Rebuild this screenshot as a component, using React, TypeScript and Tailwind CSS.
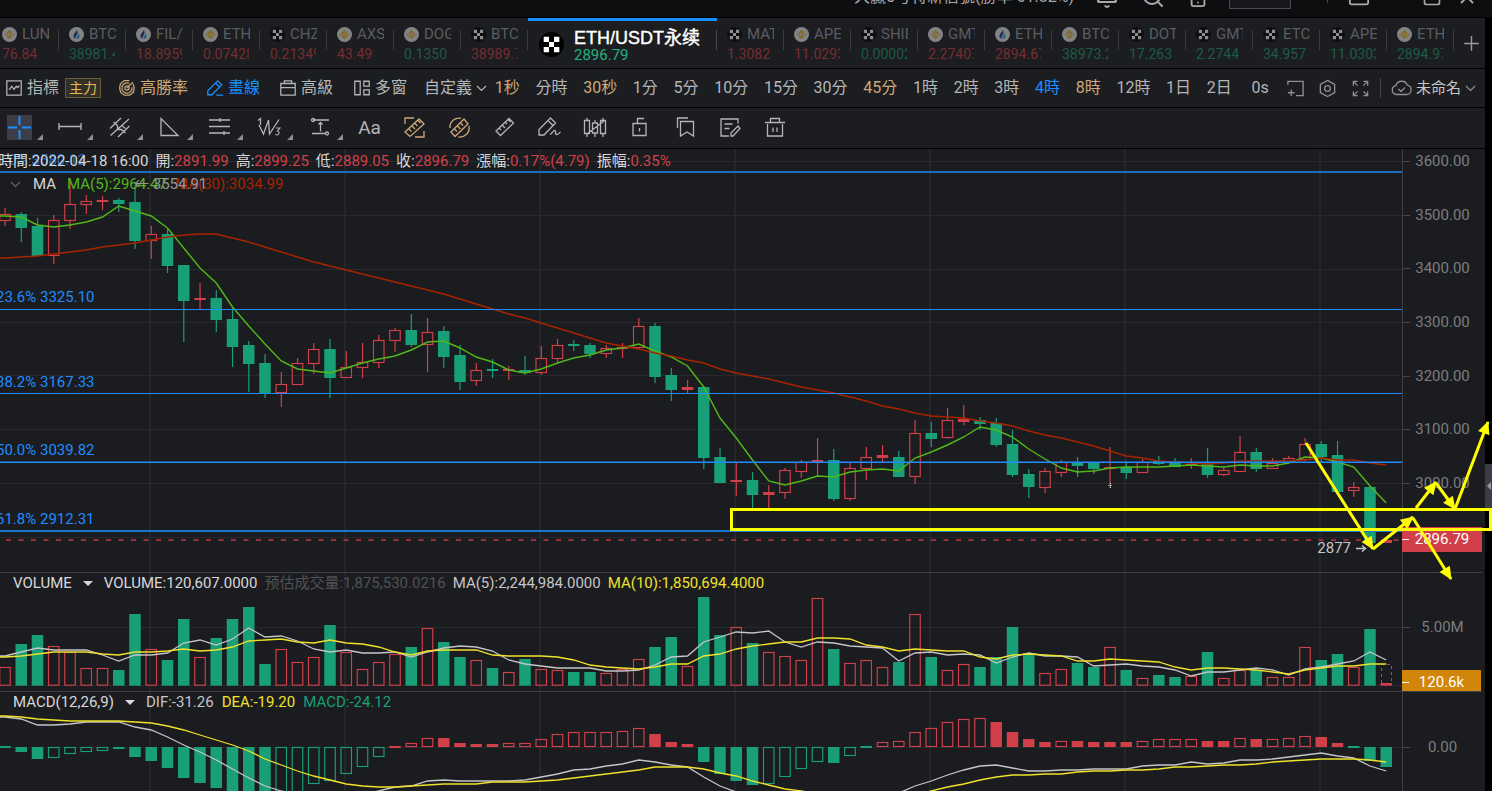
import type { ReactNode } from "react";
import { Plus, Bell, Search, Smartphone, AppWindow, Minus, Square, X } from "lucide-react";

type Exchange = "okx" | "binance" | "huobi";
type Trend = "up" | "down";

const UP = "#d1404a";
const DOWN = "#189f78";
const BLUE = "#1e8cff";
const CJK = "font-['Roboto','Noto_Sans_CJK_TC',sans-serif]";

const leftTabs: [Exchange, string, string, Trend][] = [
  ["binance", "LUN", "76.84", "up"],
  ["huobi", "BTC", "38981.4", "down"],
  ["huobi", "FIL/", "18.8959", "up"],
  ["binance", "ETH", "0.07428", "up"],
  ["okx", "CHZ", "0.21349", "up"],
  ["binance", "AXS", "43.49", "up"],
  ["binance", "DOG", "0.1350", "down"],
  ["okx", "BTC", "38989.7", "up"],
];

const rightTabs: [Exchange, string, string, Trend][] = [
  ["okx", "MAT", "1.3082", "up"],
  ["binance", "APE", "11.0293", "up"],
  ["okx", "SHIB", "0.00002", "down"],
  ["binance", "GMT", "2.27407", "up"],
  ["huobi", "ETH", "2894.67", "up"],
  ["binance", "BTC", "38973.2", "down"],
  ["okx", "DOT", "17.263", "down"],
  ["okx", "GMT", "2.2744", "down"],
  ["okx", "ETC", "34.957", "down"],
  ["okx", "APE", "11.0303", "down"],
  ["binance", "ETH", "2894.97", "down"],
];

const intervals = [
  "1秒", "分時", "30秒", "1分", "5分", "10分", "15分", "30分", "45分", "1時", "2時",
  "3時", "4時", "8時", "12時", "1日", "2日", "0s",
];
const goldIntervals = ["1秒", "30秒", "45分", "8時"];

// [color, high, bodyTop, bodyBottom, low]
const candles: [string, number, number, number, number][] = [
  ["r", 208, 214, 221, 226], ["g", 212, 214, 228, 242], ["g", 218, 226, 256, 256], ["r", 215, 220, 256, 264],
  ["r", 178, 204, 221, 229], ["r", 195, 201, 205, 214], ["r", 196, 200, 202, 210], ["g", 198, 200, 204, 212],
  ["g", 185, 202, 241, 249], ["r", 226, 234, 241, 259], ["g", 229, 234, 266, 273], ["g", 265, 265, 301, 342],
  ["r", 283, 298, 300, 309], ["g", 290, 298, 320, 332], ["g", 308, 319, 347, 367], ["g", 341, 345, 364, 392],
  ["g", 354, 363, 393, 398], ["r", 372, 384, 393, 407], ["r", 358, 363, 385, 385], ["r", 343, 349, 364, 374],
  ["g", 339, 349, 378, 398], ["r", 351, 367, 378, 378], ["r", 343, 362, 368, 378], ["r", 335, 340, 363, 368],
  ["r", 328, 330, 341, 352], ["g", 314, 330, 345, 347], ["r", 318, 332, 345, 372], ["g", 326, 331, 357, 368],
  ["g", 345, 355, 382, 390], ["r", 363, 370, 381, 386], ["g", 359, 369, 371, 378], ["r", 366, 369, 371, 380],
  ["g", 356, 370, 373, 375], ["r", 346, 358, 373, 375], ["r", 339, 345, 359, 363], ["g", 340, 344, 346, 351],
  ["g", 343, 345, 354, 358], ["r", 345, 348, 354, 358], ["r", 343, 347, 349, 358], ["r", 318, 326, 348, 349],
  ["g", 323, 326, 377, 383], ["g", 368, 375, 390, 401], ["r", 380, 387, 390, 393], ["g", 386, 387, 458, 469],
  ["g", 448, 457, 483, 483], ["r", 462, 480, 482, 496], ["g", 472, 480, 495, 510], ["r", 485, 492, 495, 508],
  ["r", 468, 470, 493, 499], ["r", 460, 462, 472, 478], ["r", 438, 460, 462, 476], ["g", 449, 460, 499, 501],
  ["r", 462, 468, 499, 501], ["r", 447, 457, 469, 480], ["r", 445, 455, 458, 462], ["g", 451, 457, 477, 477],
  ["r", 420, 433, 477, 484], ["g", 422, 433, 439, 447], ["r", 408, 420, 438, 439], ["r", 405, 419, 422, 425],
  ["g", 417, 420, 424, 430], ["g", 418, 423, 445, 447], ["g", 430, 444, 475, 477], ["g", 469, 474, 487, 498],
  ["r", 468, 471, 488, 493], ["r", 460, 462, 473, 477], ["g", 457, 462, 466, 477], ["g", 462, 463, 469, 474],
  ["r", 447, 467, 469, 488], ["g", 461, 467, 473, 479], ["r", 459, 462, 473, 473], ["g", 456, 461, 464, 465],
  ["g", 458, 463, 467, 467], ["r", 458, 464, 466, 469], ["g", 448, 463, 475, 478], ["r", 468, 470, 475, 476],
  ["r", 436, 452, 472, 472], ["g", 448, 452, 469, 472], ["r", 458, 463, 469, 469], ["r", 456, 458, 463, 463],
  ["r", 438, 444, 460, 461], ["g", 441, 444, 457, 462], ["g", 441, 455, 492, 492], ["r", 482, 487, 491, 497],
  ["g", 486, 487, 543, 545], ["r", 540, 540, 543, 543],
];

const ma5 = [
  216, 217, 225, 227, 225, 222, 217, 206, 211, 216, 228, 248, 268, 283, 307, 326, 344, 361, 369, 371, 373, 368,
  363, 359, 356, 350, 342, 341, 348, 357, 362, 370, 373, 369, 363, 358, 355, 350, 348, 344, 351, 357, 366, 387,
  418, 438, 460, 481, 485, 481, 476, 477, 472, 470, 469, 471, 458, 452, 445, 437, 427, 430, 437, 449, 459, 468,
  472, 471, 468, 467, 467, 467, 466, 465, 466, 467, 465, 466, 466, 463, 457, 458, 462, 467, 486, 503,
];

const ma30 = [
  258, 257, 256, 254, 252, 250, 247, 245, 243, 240, 237, 235, 234, 234, 238, 242, 247, 252, 257, 262, 266, 270,
  274, 278, 282, 286, 290, 294, 299, 304, 309, 314, 318, 323, 328, 333, 338, 343, 346, 349, 353, 356, 360, 363,
  369, 373, 376, 379, 383, 387, 390, 393, 397, 401, 406, 409, 413, 416, 417, 418, 421, 423, 426, 431, 435, 438,
  442, 446, 451, 456, 458, 461, 462, 463, 464, 463, 461, 461, 461, 461, 460, 458, 460, 460, 463, 465,
];

const volumeTops = [
  667, 644, 635, 646, 652, 668, 668, 670, 614, 649, 660, 619, 657, 638, 619, 607, 664, 649, 662, 657, 625, 652,
  669, 662, 654, 647, 628, 642, 657, 660, 668, 672, 659, 669, 670, 672, 672, 673, 669, 659, 647, 637, 666, 597,
  635, 627, 643, 652, 656, 660, 598, 649, 663, 660, 667, 662, 614, 657, 670, 664, 667, 657, 627, 653, 673, 669,
  663, 667, 647, 670, 678, 675, 677, 676, 652, 678, 670, 670, 677, 677, 647, 660, 654, 667, 629, 683,
];

const volMa5 = [
  656, 652, 648, 650, 650, 650, 655, 661, 655, 655, 653, 643, 640, 645, 639, 628, 637, 636, 641, 649, 652, 650,
  653, 653, 652, 657, 652, 648, 646, 647, 651, 660, 664, 666, 668, 668, 668, 671, 671, 670, 665, 657, 656, 642,
  637, 632, 633, 631, 642, 647, 642, 643, 646, 647, 648, 661, 653, 652, 655, 654, 655, 663, 657, 653, 656, 656,
  657, 666, 665, 664, 666, 667, 670, 676, 672, 672, 670, 668, 670, 675, 669, 667, 664, 661, 652, 660,
];

const volMa10 = [
  657, 656, 654, 652, 652, 652, 654, 655, 652, 652, 651, 649, 651, 650, 647, 641, 640, 639, 642, 643, 640, 643,
  644, 647, 652, 655, 651, 650, 650, 650, 655, 656, 656, 656, 657, 660, 665, 667, 668, 669, 667, 664, 664, 656,
  654, 649, 646, 644, 642, 642, 638, 638, 639, 645, 647, 651, 649, 650, 651, 651, 657, 659, 655, 654, 655, 656,
  661, 661, 659, 660, 661, 662, 667, 670, 668, 668, 669, 670, 672, 674, 670, 668, 666, 666, 664, 664,
];

// Far end of every histogram bar, then whether the bar is outlined (h) or solid (f)
const macdEnds = [
  748, 752, 759, 758, 754, 752, 751, 749, 757, 761, 768, 778, 783, 788, 796, 798, 794, 800, 795, 784, 781, 774,
  767, 757, 746, 743, 738, 738, 743, 744, 744, 743, 743, 739, 734, 732, 732, 732, 731, 728, 734, 742, 744, 762,
  774, 781, 785, 784, 777, 769, 762, 763, 756, 748, 742, 741, 732, 728, 722, 719, 718, 722, 732, 739, 742, 741,
  741, 742, 742, 742, 741, 739, 739, 739, 741, 741, 738, 739, 739, 738, 736, 737, 743, 748, 761, 767,
];
const macdFill =
  "fffhhhhffffffffffhhhhhhh" + "fhhffffhhhhhhhhh" + "fffffff" + "hhhhfhf" + "hhhhhhhffffhffffhhhhffhfhhhfffff";

const dif = [
  717, 719, 725, 725, 724, 722, 722, 722, 727, 730, 737, 745, 752, 760, 769, 778, 786, 791, 795, 797, 798, 797,
  794, 791, 787, 786, 781, 780, 781, 781, 781, 781, 780, 777, 774, 770, 769, 766, 764, 760, 762, 765, 767, 777,
  786, 792, 798, 803, 806, 808, 808, 807, 806, 803, 799, 793, 786, 781, 775, 770, 766, 765, 768, 771, 771, 770,
  770, 769, 769, 769, 766, 765, 765, 762, 764, 763, 760, 760, 759, 757, 755, 753, 756, 758, 766, 771,
];

const dea = [
  716, 717, 719, 720, 721, 721, 721, 721, 722, 723, 726, 730, 735, 740, 745, 751, 759, 765, 771, 776, 780, 784,
  786, 787, 787, 786, 785, 784, 784, 784, 782, 782, 782, 781, 780, 778, 776, 774, 772, 770, 767, 767, 767, 769,
  773, 776, 781, 785, 789, 791, 794, 796, 797, 798, 798, 797, 795, 791, 787, 784, 780, 777, 775, 775, 774, 774,
  772, 771, 771, 770, 770, 769, 767, 767, 766, 765, 765, 764, 762, 761, 760, 759, 759, 759, 760, 762,
];

const centerX = (i: number) => 5 + i * 16.25;
const linePoints = (ys: number[]) => `0,${ys[0]} ` + ys.map((y, i) => `${centerX(i)},${y}`).join(" ");

function ExchangeLogo({ kind, size }: { kind: Exchange; size: number }) {
  return (
    <svg width={size} height={size} viewBox="0 0 16 16" className="shrink-0">
      {kind === "okx" && (
        <>
          <circle cx="8" cy="8" r="8" fill="#000" />
          <path d="M3 3h3.4v3.4H3zM9.6 3H13v3.4H9.6zM6.4 6.4h3.2v3.2H6.4zM3 9.6h3.4V13H3zM9.6 9.6H13V13H9.6z" fill="#fff" />
        </>
      )}
      {kind === "binance" && (
        <>
          <circle cx="8" cy="8" r="8" fill="#e8e8e8" />
          <path d="M8 3.2 11.4 6.6 10.2 7.8 8 5.6 5.8 7.8 4.6 6.6zM8 12.8 4.6 9.4 5.8 8.2 8 10.4 10.2 8.2 11.4 9.4zM8 6.7 9.3 8 8 9.3 6.7 8zM3.8 6.9 4.9 8 3.8 9.1 2.7 8zM12.2 6.9 13.3 8 12.2 9.1 11.1 8z" fill="#efa90f" />
        </>
      )}
      {kind === "huobi" && (
        <>
          <circle cx="8" cy="8" r="8" fill="#e8e8e8" />
          <path d="M8.2 2.6c.4 2.4-3.4 4-3.4 6.9 0 1.5.8 2.6 1.9 3.1-.4-2.6 2.4-3.9 2.4-6.8 0-1.3-.5-2.6-.9-3.2z" fill="#26377c" />
          <path d="M10.3 6.3c.2 2.2-2.7 3.3-2.5 6.4 2.2.1 3.8-1.4 3.6-3.4-.1-1.2-.6-2.2-1.1-3z" fill="#2ea6e0" />
        </>
      )}
    </svg>
  );
}

function MarketTab({ tab }: { tab: [Exchange, string, string, Trend] }) {
  const [kind, name, price, trend] = tab;
  return (
    <button type="button" className="relative w-[67px] shrink-0 pl-[10px] text-left">
      <span className="flex w-[47px] items-center gap-[5px] overflow-hidden whitespace-nowrap text-[15px] leading-5 text-[#5b5c60]">
        <span className="opacity-50"><ExchangeLogo kind={kind} size={15} /></span>
        {name}
      </span>
      <span
        className={`block w-[46px] overflow-hidden whitespace-nowrap text-[14px] leading-5 ${
          trend === "up" ? "text-[#752d33]" : "text-[#1d5a47]"
        }`}
      >
        {price}
      </span>
      <span className="absolute right-0 top-[10px] h-5 w-px bg-[#3a3b3f]" />
    </button>
  );
}

function TitleBar() {
  return (
    <header className="h-[18px] overflow-hidden border-b border-black bg-[#0d0e10] text-[#a9aaac]">
      <div className="-mt-6 flex h-[42px] items-center justify-end pr-[14px]">
        <span className="mr-[21px] text-[16px]">大贏5号特新信號(勝率 61.82%)</span>
        <button type="button" aria-label="Alerts" className="mr-[22px]"><Bell size={24} strokeWidth={2} /></button>
        <button type="button" aria-label="Search" className="mr-[22px]"><Search size={24} strokeWidth={2} /></button>
        <button type="button" aria-label="Mobile" className="mr-5"><Smartphone size={22} strokeWidth={2} /></button>
        <button type="button" aria-label="Account" className="h-[23px] w-[62px] border border-[#4a4b50] bg-[#17181c]" />
        <span className="ml-9 mr-5 h-3 w-px bg-[#4a4b50]" />
        <button type="button" aria-label="Layout" className="mr-[18px]"><AppWindow size={22} /></button>
        <button type="button" aria-label="Minimize" className="mr-[14px]"><Minus size={20} /></button>
        <button type="button" aria-label="Maximize" className="mr-[14px]"><Square size={20} /></button>
        <button type="button" aria-label="Close"><X size={22} /></button>
      </div>
    </header>
  );
}

function MarketTabs() {
  return (
    <nav className="-ml-2 flex h-[51px] border-b border-black">
      <div className="flex pt-[2px]">{leftTabs.map((t, i) => <MarketTab key={i} tab={t} />)}</div>
      <button type="button" className="relative flex w-[189px] shrink-0 items-center border-t-[3px] border-[#1890ff] pl-[11px] text-left">
        <ExchangeLogo kind="okx" size={25} />
        <span className="ml-[10px] whitespace-nowrap">
          <span className="block font-['Liberation_Sans','Noto_Sans_CJK_SC',sans-serif] text-[18px] leading-5 text-white [-webkit-text-stroke:0.4px_white]">
            ETH/USDT永续
          </span>
          <span className="block text-[15px] leading-[14px] text-[#1eb37f]">2896.79</span>
        </span>
        <span className="absolute right-0 top-[9px] h-5 w-px bg-[#4a4b4f]" />
      </button>
      <div className="flex pt-[2px]">{rightTabs.map((t, i) => <MarketTab key={i} tab={t} />)}</div>
      <button type="button" aria-label="Add market" className="flex flex-1 items-center justify-center pl-1 text-[#9a9b9e]">
        <Plus size={23} strokeWidth={1.5} />
      </button>
    </nav>
  );
}

function Icon({ children, size = 20 }: { children: ReactNode; size?: number }) {
  return (
    <svg width={size} height={size} viewBox="0 0 20 20" fill="none" stroke="currentColor" strokeWidth="1.4" className="shrink-0">
      {children}
    </svg>
  );
}

function Chevron() {
  return (
    <svg width="11" height="7" viewBox="0 0 11 7" fill="none" stroke="currentColor" strokeWidth="1.2">
      <path d="m1 1 4.5 4.5L10 1" />
    </svg>
  );
}

function MainToolbar() {
  const item = "flex items-center gap-1 whitespace-nowrap";
  return (
    <div className="flex h-[39px] items-center border-b border-black text-[16px] leading-5 text-[#b4b5b7]">
      <div className="flex items-center pl-[5px]">
        <button type="button" className={item}>
          <Icon size={18}>
            <path d="M2 2h16v16H2zM4.5 12l3-4 2.5 3.5L12.5 8l1.5 1.5 2-2" />
          </Icon>
          指標
        </button>
        <button type="button" className="ml-[6px] h-5 border border-[#6b5c3c] bg-[#33302a] px-[3px] text-[14px] leading-[18px] text-[#eeb653]">
          主力
        </button>
        <button type="button" className={`${item} ml-[17px] text-[#cda878]`}>
          <Icon size={18}>
            <path d="M12.5 1.800H7L2.700 5.300 1.800 10l1.200 5L7 18h6l4.200-3.500L18 9.500l-1.300-4.200" />
            <path d="M12.5 5A5.600 5.600 0 1 0 15.500 9M10 10l6.500-6.500" />
            <circle cx="10" cy="10" r="2.300" />
          </Icon>
          高勝率
        </button>
        <button type="button" className={`${item} ml-[18px] text-[#1890ff]`}>
          <Icon size={18}>
            <path d="M2 17.500V13L13 2l4.500 4.500-11 11zM10.500 4.500 15 9M11.500 18H19" />
          </Icon>
          畫線
        </button>
        <button type="button" className={`${item} ml-[19px]`}>
          <Icon size={18}>
            <path d="M2 5h16v13H2zM6 5V2h8v3M2 9.500h16" />
          </Icon>
          高級
        </button>
        <button type="button" className={`${item} ml-5`}>
          <Icon size={18}>
            <path d="M2 2.500h6v15H2zM12 2.500h6V8h-6zM12 12h6v5.500h-6z" />
          </Icon>
          多窗
        </button>
      </div>
      <div className="ml-[17px] flex flex-1 items-center justify-between">
        <button type="button" className="-mr-2 flex items-center gap-1 whitespace-nowrap">
          自定義 <Chevron />
        </button>
        {intervals.map((label) => (
          <button
            key={label}
            type="button"
            className={
              label === "4時"
                ? "text-[#1890ff]"
                : goldIntervals.includes(label)
                  ? "text-[#cda878]"
                  : label === "0s"
                    ? "pl-1"
                    : ""
            }
          >
            {label}
          </button>
        ))}
      </div>
      <div className="ml-[17px] flex items-center text-[#8f9093]">
        <button type="button" aria-label="New pane" className="mr-[13px]">
          <Icon size={19}>
            <path d="M2 6V2.500h16v15h-7.500M2 14.500h7M5.500 11v7" />
          </Icon>
        </button>
        <button type="button" aria-label="Settings" className="mr-[14px]">
          <Icon size={19}>
            <path d="m10 1.500 7.500 4.200v8.600L10 18.500l-7.500-4.200V5.700z" />
            <circle cx="10" cy="10" r="3" />
          </Icon>
        </button>
        <button type="button" aria-label="Full screen">
          <Icon size={19}>
            <path d="M2.500 7V2.500H7M2.500 2.500l4.500 4.500M13 2.500h4.500V7M17.500 2.500 13 7M2.500 13v4.500H7M2.500 17.500 7 13M13 17.500h4.500V13M17.500 17.500 13 13" />
          </Icon>
        </button>
        <span className="mx-[10px] h-5 w-px bg-[#434448]" />
        <button type="button" className="flex items-center gap-1 whitespace-nowrap pr-[9px]">
          <svg width="21" height="16" viewBox="0 0 21 16" fill="none" stroke="currentColor" strokeWidth="1.3">
            <path d="M5.500 14.500a4.500 4.500 0 0 1-.6-8.900 6 6 0 0 1 11.400-.4 4.700 4.700 0 0 1-.8 9.300zM7.500 9l2.500 2.500L14 7.500" />
          </svg>
          <span className="text-[15px] text-[#c4c5c7]">未命名</span>
          <Chevron />
        </button>
      </div>
    </div>
  );
}

const drawTools: { name: string; art: ReactNode; gold?: boolean; menu?: boolean }[] = [
  { name: "Crosshair", menu: true, art: <path d="M12.500 1v9M12.500 15v9M1 12.500h9M15 12.500h9" stroke="#1890ff" strokeWidth="2" /> },
  { name: "Segment", menu: true, art: <path d="M2 11.500h22M2 8v7M24 8v7" /> },
  { name: "Channel", menu: true, art: <path d="M3 13.500 14 3M3.500 20.500 22 4M11 22 22.500 11M6.500 7l4 3.500M10.500 10.500v4h4l4 3.500M14.500 10.500l4 3" /> },
  { name: "Triangle", menu: true, art: <path d="M4 3.500v17h17z" /> },
  { name: "Levels", menu: true, art: <path d="M2 5h21M2 11.500h21M2 18h21M13 3v4M17 16v4" /> },
  {
    name: "Waves",
    menu: true,
    art: (
      <>
        <path d="M1 5.500l2.500-2v6.500M2 10l4.500 9L11.500 5l1 14L22 4.500" />
        <path d="M19 13h4l-2.500 3a2 2 0 1 1-2 3.200" strokeWidth="1.1" />
      </>
    ),
  },
  {
    name: "Price range",
    menu: true,
    art: (
      <>
        <path d="M6 5h16M5 18.500h13M13.500 7.500v9M11.500 9.500l2-2 2 2" />
        <circle cx="6" cy="5" r="1.500" />
        <circle cx="20" cy="18.500" r="1.500" />
      </>
    ),
  },
  { name: "Text", art: null },
  { name: "Measure box", gold: true, art: <path d="M3 9V3h9M22 16v6h-9M3 17 17 4l5 5L8 21.500zM7 14l2.500 2.500M10 11l3 3M13 8.500l2.500 2.500M16 5.500l2.500 2.500" /> },
  { name: "Measure circle", gold: true, art: <path d="M3 13C2.500 6 8 2.500 14 3.200M22 11c1 7-4 11.500-10.500 11M4 17 17 4l4 5L8 21.500zM7.500 14l2.500 2.500M10.500 11l3 3M13.500 8l2.500 2.500" /> },
  { name: "Ruler", art: <path d="M4 16 17 3.500l4.500 4.500-13 12.500zM7 13l2 2M10 10l3 3M13 7l2 2M16 4.500l2.500 2.500" /> },
  { name: "Brush", art: <path d="M2 20v-5.500L13.500 3l5 5L7 20zM11 5.500l5 5M13 19.500c2-1 3.500-4.500 5-4s-.5 4 1.500 4 2.500-1.500 4-2.500" /> },
  { name: "Candle pattern", art: <path d="M2.500 5.500h5v13h-5zM5 3v2.500M5 18.500V22M10.500 8h5v10h-5zM13 5v3M13 18v4M18.500 5.500h5v13h-5zM21 3v2.500M21 18.500V22M5 19 22 6" /> },
  { name: "Lock", art: <path d="M6 8.500h13v12H6zM12.500 13v3.500M10.500 8.500v-5H17" /> },
  { name: "Bookmarks", art: <path d="M8.500 6.500h13V21L15 17l-6.500 4zM5.500 13V3H16" /> },
  { name: "Notes", art: <path d="M21 8.500V4H4v17h8M7.500 9h8M7.500 13.500h5M14 21v-3l7-7 2 2.500-7 7.500z" /> },
  { name: "Delete", art: <path d="M3 7.500h20M5.500 9v12h15V9M8.500 7V3.500h9V7M11 12.500V17M15 12.500V17" /> },
];

function DrawToolbar() {
  return (
    <div className="flex h-[41px] items-center border-b border-black pb-px text-[#b4b5b7]">
      {drawTools.map((tool, i) => (
        <button
          key={tool.name}
          type="button"
          aria-label={tool.name}
          className={`flex items-end pl-[7px] ${tool.menu ? "w-[50px]" : "w-[45px]"} ${tool.gold ? "text-[#cda878]" : ""}`}
        >
          <span className={`flex size-[25px] items-center justify-center ${i === 0 ? "bg-[#3c3d46]" : ""}`}>
            {tool.art ? (
              <svg width="25" height="25" viewBox="0 0 25 25" fill="none" stroke="currentColor" strokeWidth="1.3">
                {tool.art}
              </svg>
            ) : (
              <span className="text-[19px] leading-5">Aa</span>
            )}
          </span>
          {tool.menu && (
            <svg width="6" height="6" viewBox="0 0 6 6" className="ml-[5px]">
              <path d="M6 0v6H0z" fill="#8f9093" />
            </svg>
          )}
        </button>
      ))}
    </div>
  );
}

function VerticalGrid({ top, bottom }: { top: number; bottom: number }) {
  return (
    <g stroke="#25262a" strokeWidth="2">
      {[150, 345, 540, 735, 930, 1125, 1320].map((x) => (
        <line key={x} x1={x} x2={x} y1={top} y2={bottom} />
      ))}
    </g>
  );
}

function Bar({ x, top, bottom, color, solid }: { x: number; top: number; bottom: number; color: string; solid: boolean }) {
  const height = Math.max(bottom - top, 2);
  if (solid || height <= 3) return <rect x={x} y={top} width="11.5" height={height} fill={color} />;
  return <rect x={x + 0.5} y={top + 0.5} width="10.5" height={height - 1} fill="none" stroke={color} strokeWidth="1.15" />;
}

function PriceChart() {
  return (
    <svg viewBox="0 149 1402 423" preserveAspectRatio="none" className="block h-full w-full">
      <VerticalGrid top={149} bottom={572} />
      <g stroke="#28292d">
        {[161.5, 215.5, 269.5, 322.5, 375.5, 429.5, 483.5, 537.5].map((y) => (
          <line key={y} x1="0" x2="1402" y1={y} y2={y} />
        ))}
      </g>
      {candles.map(([c, high, top, bottom, low], i) => {
        const x = centerX(i) - 5.75;
        const color = c === "r" ? UP : DOWN;
        return (
          <g key={i}>
            <rect x={x + 5.2} y={high} width="1.2" height={top - high} fill={color} />
            <rect x={x + 5.2} y={bottom} width="1.2" height={low - bottom} fill={color} />
            <Bar x={x} top={top} bottom={bottom} color={color} solid={c === "g"} />
          </g>
        );
      })}
      <polyline points={linePoints(ma5)} fill="none" stroke="#52b81a" strokeWidth="1.4" />
      <polyline points={linePoints(ma30)} fill="none" stroke="#a82300" strokeWidth="1.4" />
      <g stroke={BLUE}>
        <line x1="0" x2="1402" y1="172" y2="172" strokeWidth="2" stroke="#1a6fc2" />
        <line x1="0" x2="1402" y1="309.5" y2="309.5" />
        <line x1="0" x2="1402" y1="393.5" y2="393.5" />
        <line x1="0" x2="1402" y1="462.2" y2="462.2" strokeWidth="1.4" />
        <line x1="0" x2="1402" y1="531" y2="531" strokeWidth="2" stroke="#1a76cc" />
      </g>
      <line x1="6" x2="1402" y1="540" y2="540" stroke="#b83b44" strokeWidth="1.5" strokeDasharray="5 7.5" />
      <path d="M1110.500 483v5M1108.500 485.500h4" stroke="#d5e6e6" strokeDasharray="1 1" />
    </svg>
  );
}

function VolumeChart() {
  return (
    <svg viewBox="0 573 1402 118" preserveAspectRatio="none" className="block h-full w-full">
      <VerticalGrid top={573} bottom={691} />
      <path d="M0 627.500h1402M0 685.500h1402" stroke="#28292d" />
      {volumeTops.map((top, i) => (
        <Bar
          key={i}
          x={centerX(i) - 5.75}
          top={top}
          bottom={685.7}
          color={candles[i][0] === "r" ? UP : DOWN}
          solid={candles[i][0] === "g" || i === 85}
        />
      ))}
      <path d="M1381.500 683v-18.500h10V683" fill="none" stroke="#67686b" strokeDasharray="3 3" />
      <polyline points={linePoints(volMa5)} fill="none" stroke="#c4c5c9" strokeWidth="1.3" />
      <polyline points={linePoints(volMa10)} fill="none" stroke="#f0e22c" strokeWidth="1.3" />
    </svg>
  );
}

function MacdChart() {
  return (
    <svg viewBox="0 692 1402 99" preserveAspectRatio="none" className="block h-full w-full">
      <VerticalGrid top={692} bottom={791} />
      <path d="M0 747.500h1402" stroke="#28292d" />
      {macdEnds.map((end, i) => (
        <Bar
          key={i}
          x={centerX(i) - 5.75}
          top={end === 748 ? 746 : Math.min(end, 747)}
          bottom={Math.max(end, 747)}
          color={end < 747 ? UP : DOWN}
          solid={macdFill[i] === "f"}
        />
      ))}
      <polyline points={linePoints(dif)} fill="none" stroke="#c4c5c9" strokeWidth="1.3" />
      <polyline points={linePoints(dea)} fill="none" stroke="#f0e22c" strokeWidth="1.3" />
    </svg>
  );
}

function AxisLabel({ children }: { children: ReactNode }) {
  return (
    <div className="relative h-5 text-center leading-5">
      <span className="absolute left-0 top-[10px] h-px w-[7px] bg-[#45464a]" />
      {children}
    </div>
  );
}

const fibLevels: [string, string][] = [
  ["0.0% 3580.12", "top-[1px] opacity-70"],
  ["23.6% 3325.10", "top-[138px]"],
  ["38.2% 3167.33", "top-[223px]"],
  ["50.0% 3039.82", "top-[291px]"],
  ["61.8% 2912.31", "top-[360px]"],
];

const quote: [string, string][] = [
  ["開", "2891.99"],
  ["高", "2899.25"],
  ["低", "2889.05"],
  ["收", "2896.79"],
  ["漲幅", "0.17%(4.79)"],
  ["振幅", "0.35%"],
];

function MenuArrow() {
  return (
    <svg width="10" height="5" viewBox="0 0 10 5">
      <path d="M0 0h10L5 5z" fill="currentColor" />
    </svg>
  );
}

function PricePanel() {
  return (
    <section className="flex h-[423px]">
      <div className="relative min-w-0 flex-1">
        <PriceChart />
        {fibLevels.map(([label, place]) => (
          <span key={label} className={`absolute -left-1 whitespace-nowrap leading-5 text-[#1e8cff] ${place}`}>
            {label}
          </span>
        ))}
        <div className="absolute -left-[2px] top-[2px] flex gap-[7px] whitespace-nowrap leading-5 text-[#d8d8da]">
          <span>時間:2022-04-18 16:00</span>
          {quote.map(([label, value]) => (
            <span key={label}>
              {label}:<span className="text-[#d1404a]">{value}</span>
            </span>
          ))}
        </div>
        <div className="absolute left-[10px] top-[25px] flex items-center whitespace-nowrap leading-5">
          <span className="mr-3 text-[#66676b]"><Chevron /></span>
          <span className="text-[#d8d8da]">MA</span>
          <span className="ml-[11px] text-[#52b81a]">MA(5):2964.47</span>
          <span className="ml-2 text-[#a82300]">MA(30):3034.99</span>
        </div>
        <span className="absolute left-[134px] top-[25px] leading-5 text-[#96979a]">← 3554.91</span>
        <span className="absolute right-[35px] top-[389px] flex items-center gap-[5px] leading-5 text-[#c4c5c9]">
          2877
          <svg width="11" height="8" viewBox="0 0 11 8" fill="none" stroke="currentColor" strokeWidth="1.4">
            <path d="M0 4.500h9M6 1.500l3.500 3-3.500 3" />
          </svg>
        </span>
      </div>
      <div className="w-20 shrink-0 border-l border-[#3f4045] pt-[2px] text-[#7b7c7f]">
        <div className="flex h-[342px] flex-col justify-between">
          {["3600.00", "3500.00", "3400.00", "3300.00", "3200.00", "3100.00", "3000.00"].map((p) => (
            <AxisLabel key={p}>{p}</AxisLabel>
          ))}
        </div>
        <div className="relative -ml-px mt-[34px] h-[25px] bg-[#d1404a] text-center leading-6 text-white">
          <span className="absolute left-0 top-3 h-px w-[7px] bg-white" />
          2896.79
        </div>
      </div>
    </section>
  );
}

function VolumePanel() {
  return (
    <section className="flex h-[119px] border-t border-[#3f4045]">
      <div className="relative min-w-0 flex-1">
        <VolumeChart />
        <div className="absolute left-[13px] top-0 flex items-center gap-[7px] whitespace-nowrap leading-5 text-[#d8d8da]">
          <button type="button" className="flex items-center gap-[11px]">
            VOLUME <MenuArrow />
          </button>
          <span className="ml-1">VOLUME:120,607.0000</span>
          <span className="text-[#515256]">预估成交量:1,875,530.0216</span>
          <span className="text-[#c4c5c9]">MA(5):2,244,984.0000</span>
          <span className="text-[#f0e22c]">MA(10):1,850,694.4000</span>
        </div>
      </div>
      <div className="flex w-20 shrink-0 flex-col justify-between border-l border-[#3f4045] pt-[44px] text-[#7b7c7f]">
        <AxisLabel>5.00M</AxisLabel>
        <div className="relative -ml-px mr-px h-[21px] bg-[#d18609] pt-[2px] text-center leading-5 text-white">
          <span className="absolute left-0 top-3 h-px w-[7px] bg-white" />
          120.6k
        </div>
      </div>
    </section>
  );
}

function MacdPanel() {
  return (
    <section className="flex h-[100px] border-t border-[#3f4045]">
      <div className="relative min-w-0 flex-1">
        <MacdChart />
        <div className="absolute left-[13px] top-0 flex items-center gap-2 whitespace-nowrap leading-5 text-[#c4c5c9]">
          <button type="button" className="flex items-center gap-[11px] text-[#d8d8da]">
            MACD(12,26,9) <MenuArrow />
          </button>
          <span className="ml-[3px]">DIF:-31.26</span>
          <span className="text-[#f0e22c]">DEA:-19.20</span>
          <span className="text-[#189f78]">MACD:-24.12</span>
        </div>
      </div>
      <div className="w-20 shrink-0 border-l border-[#3f4045] pt-[45px] text-[#7b7c7f]">
        <AxisLabel>0.00</AxisLabel>
      </div>
    </section>
  );
}

const arrows = [
  [1306, 443, 1373, 549],
  [1373, 549, 1413, 517],
  [1416, 508, 1436, 482],
  [1436, 483, 1455, 509],
  [1455, 509, 1488, 422],
  [1413, 518, 1451, 579],
];

function Annotations() {
  return (
    <svg viewBox="0 149 1492 642" preserveAspectRatio="none" className="pointer-events-none absolute inset-0 h-full w-full">
      <rect x="731.5" y="509.5" width="759" height="20" fill="none" stroke="#ff0" strokeWidth="3" />
      {arrows.map(([x1, y1, x2, y2]) => {
        const angle = (Math.atan2(y2 - y1, x2 - x1) * 180) / Math.PI;
        return (
          <g key={`${x1}-${x2}`}>
            <line x1={x1} y1={y1} x2={x2} y2={y2} stroke="#ff0" strokeWidth="3" />
            <path d="M1 0-12-6V6z" fill="#ff0" transform={`translate(${x2} ${y2}) rotate(${angle})`} />
          </g>
        );
      })}
    </svg>
  );
}

export default function App() {
  return (
    <div className={`min-h-screen overflow-hidden bg-black ${CJK}`}>
      <TitleBar />
      <div className="mr-[7px] bg-[#1c1d20]">
        <MarketTabs />
        <MainToolbar />
        <DrawToolbar />
      </div>
      <main className="relative flex text-[15px]">
        <div className="min-w-0 flex-1 overflow-hidden bg-[#1b1c1f] pr-[3px]">
          <PricePanel />
          <VolumePanel />
          <MacdPanel />
        </div>
        <aside className="w-[7px] pt-[315px]">
          <button type="button" aria-label="Expand side panel" className="flex h-11 w-full items-center justify-center bg-[#3c3d46]">
            <svg width="4" height="8" viewBox="0 0 4 8">
              <path d="M4 0v8L0 4z" fill="#9a9ba0" />
            </svg>
          </button>
        </aside>
        <Annotations />
      </main>
    </div>
  );
}
